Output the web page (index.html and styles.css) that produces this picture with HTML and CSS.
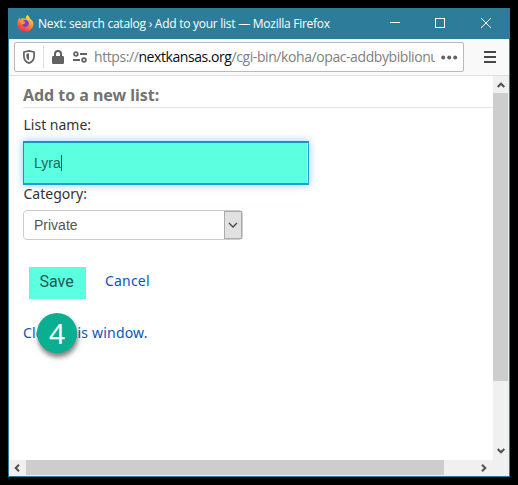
FILE: index.html
```html
<!DOCTYPE html>
<html lang="en">
<head>
<meta charset="utf-8">
<title>Next: search catalog › Add to your list</title>
<link rel="stylesheet" href="styles.css">
</head>
<body>
<div class="window">
  <header class="titlebar">
    <svg class="logo" width="17" height="17" viewBox="0 0 17 17">
      <defs>
        <linearGradient id="flame" x1="0.8" y1="0" x2="0.3" y2="1">
          <stop offset="0" stop-color="#fff04a"/><stop offset=".35" stop-color="#ffb02c"/>
          <stop offset=".65" stop-color="#ff6a36"/><stop offset="1" stop-color="#f02b5c"/>
        </linearGradient>
      </defs>
      <path fill="url(#flame)" d="M10.4 0C12 1.400 12.800 2.500 13.200 3.900C15.300 5 16.600 7 16.400 9.400C16.100 13.500 12.800 16.500 8.500 16.500C3.800 16.500.5 13.200.4 9C.3 6.600 1 4.400 2.700 2.500L3.100 4.200C4 3.500 4.800 3.200 5.700 3.200C6.700 3.200 7.700 3.500 8.500 4C8.700 2.300 9.300 1 10.400 0Z"/>
      <path fill="#7542c9" d="M6.200 5.400C8.400 3.900 11.700 5.400 11.900 8.100C12 10.700 10 12 8.200 11.900C6.500 11.800 5.200 10.700 5 9.200C6.200 9.700 7.400 9.200 8.300 8.300C7 8 5.800 7 6.200 5.400Z"/>
      <path fill="#ff9730" d="M2.800 5.200C4 4.600 5.400 4.800 6.300 5.800L8.400 7.100C7.900 8 6.800 8 6.400 8.800C5.400 9.800 3.600 8.700 2.800 5.200Z"/>
    </svg>
    <span class="caption">Next: search catalog › Add to your list — Mozilla Firefox</span>
    <svg class="controls" width="102" height="12" viewBox="0 0 102 12" fill="none" stroke="#fff" shape-rendering="crispEdges">
      <path d="M0 5.500H10M45.500 1.500H54.500V10.500H45.500Z"/>
      <path shape-rendering="auto" d="M91 1L101 11M101 1L91 11"/>
    </svg>
  </header>
  <nav class="toolbar">
    <div class="address">
      <svg class="shield" width="12" height="14" viewBox="0 0 12 14">
        <path fill="none" stroke="#626262" stroke-width="1.700" stroke-linejoin="round" d="M6 .9L11.100 2V6.200C11.100 9.700 8.800 12 6 13.100C3.200 12 .9 9.700.9 6.200V2Z"/>
        <path fill="#626262" d="M6 3.200V10.600C4.300 9.600 3.400 8.200 3.400 6.200V3.700Z"/>
      </svg>
      <span class="divider"></span>
      <svg class="lock" width="12" height="14" viewBox="0 0 12 14">
        <rect y="6" width="12" height="8" rx="1.200" fill="#626262"/>
        <path fill="none" stroke="#626262" stroke-width="2" d="M3 7V4A3 3 0 0 1 9 4V7"/>
      </svg>
      <svg class="permissions" width="14" height="12" viewBox="0 0 14 12" fill="none" stroke="#626262" stroke-width="1.800">
        <circle cx="2.900" cy="3" r="1.900"/><path d="M7 3H14M0 9H7"/><circle cx="11" cy="9" r="1.900"/>
      </svg>
      <span class="url">https://<b>nextkansas.org</b>/cgi-bin/koha/opac-addbybiblionumber</span>
      <svg class="dots" width="17" height="5" viewBox="0 0 17 5" fill="#626262"><circle cx="2.200" cy="2.500" r="2"/><circle cx="8.200" cy="2.500" r="2"/><circle cx="14.200" cy="2.500" r="2"/></svg>
    </div>
    <svg class="menu" width="12" height="12" viewBox="0 0 12 12" fill="#484848"><path d="M0 0H12V2H0ZM0 5H12V7H0ZM0 10H12V12H0Z"/></svg>
  </nav>
  <div class="viewport">
    <main class="page">
      <h1>Add to a new list:</h1>
      <label class="name-label">List name:</label>
      <div class="name-field"><span>Lyra</span><i></i></div>
      <label class="category-label">Category:</label>
      <div class="select"><span>Private</span>
        <span class="drop"><svg width="10" height="6" viewBox="0 0 10 6"><path fill="none" stroke="#444" stroke-width="1.300" d="M1 1L5 5L9 1"/></svg></span>
      </div>
      <div class="actions"><span class="save">Save</span><a class="cancel">Cancel</a></div>
      <div class="closing"><a>Close this window.</a><span class="step">4</span></div>
    </main>
    <div class="vscroll">
      <svg class="up" width="8" height="6" viewBox="0 0 8 6"><path fill="none" stroke="#505050" stroke-width="2" d="M.7 5L4 1.700L7.300 5"/></svg>
      <div class="vthumb"></div>
      <svg class="down" width="8" height="6" viewBox="0 0 8 6"><path fill="none" stroke="#505050" stroke-width="2" d="M.7 1L4 4.300L7.300 1"/></svg>
    </div>
    <div class="hscroll">
      <svg class="left" width="6" height="8" viewBox="0 0 6 8"><path fill="none" stroke="#505050" stroke-width="2" d="M5 .7L1.700 4L5 7.300"/></svg>
      <div class="hthumb"></div>
      <svg class="right" width="6" height="8" viewBox="0 0 6 8"><path fill="none" stroke="#505050" stroke-width="2" d="M1 .7L4.300 4L1 7.300"/></svg>
    </div>
    <div class="corner"></div>
  </div>
</div>
</body>
</html>
```
FILE: styles.css
```css
* { box-sizing: border-box; }
body { margin: 0; padding: 8px; height: 485px; background: #000; overflow: hidden; font-family: "Noto Sans", sans-serif; }
svg { display: block; flex: none; }
.window { width: 502px; height: 469px; border: 1px solid #2d7d9a; background: #fff; display: flex; flex-direction: column; }
.titlebar { height: 30px; flex: none; background: #2d7d9a; display: flex; align-items: center; padding: 0 17px 0 8px; }
.logo { margin-top: -1px; }
.caption { margin-left: 4px; flex: 1; color: #fff; font: 12px/16px "Open Sans", sans-serif; white-space: nowrap; letter-spacing: -.26px; }
.controls { margin-top: -2px; }
.toolbar { height: 37px; flex: none; background: #f9f9fa; border-bottom: 1px solid #ddd; display: flex; align-items: flex-start; padding: 3px 0 0 5px; }
.address { width: 450px; height: 30px; border: 1px solid #b9b9b9; border-radius: 2px; background: #fff; display: flex; align-items: center; padding-left: 8px; }
.divider { width: 1px; height: 22px; margin: 0 8px; background: #ddd; }
.permissions { margin-left: 9px; }
.url { width: 341px; margin-left: 7px; overflow: hidden; white-space: nowrap; font: 14px/20px "Open Sans", sans-serif; color: #808080; letter-spacing: -.42px; }
.url b { font-weight: 400; color: #0c0c0d; }
.dots { margin-left: 6px; }
.menu { margin: 9px 0 0 20px; }
.viewport { flex: 1; display: grid; grid-template-columns: 484px 16px; grid-template-rows: 384px 16px; }
.page { padding: 9px 0 0 14px; display: flex; flex-direction: column; align-items: flex-start; color: #333; font-size: 14px; line-height: 20px; }
h1 { margin: 0; width: 470px; height: 23px; border-bottom: 1px solid #e5e5e5; color: #727272; font-size: 16px; line-height: 21px; font-weight: 700; letter-spacing: -.04px; }
.name-label { margin: 7px 0 0 .5px; }
.name-field { width: 286px; height: 44px; margin-top: 6px; border: 1px solid #1e9de0; border-width: 2px 1px 2px 1px; border-top-color: #1297bd; border-left-color: #1297bd; background: #5cffe0; box-shadow: inset -1px 0 #d8f8fb, 0 0 8px rgba(82,168,236,.6); display: flex; align-items: center; padding-left: 10px; color: #25665c; font: 14px/20px "Liberation Sans", sans-serif; }
.name-field i { width: 1px; height: 16px; background: #174e47; }
.category-label { margin: -1px 0 0 .5px; }
.select { width: 220px; height: 30px; margin-top: 6px; border: 1px solid #ccc; border-radius: 4px; display: flex; align-items: center; justify-content: space-between; padding-left: 10px; color: #555; font: 14px/20px "Liberation Sans", sans-serif; }
.drop { width: 18px; height: 28px; border: 1px solid #aaa; background: #e1e1e1; display: flex; align-items: center; justify-content: center; }
.actions { margin: 27px 0 0 6px; display: flex; align-items: flex-start; }
.save { width: 57px; height: 32px; padding-right: 2px; background: #5cffe0; color: #235a52; font: 16px/30px Roboto, sans-serif; text-align: center; }
.cancel { margin: 4px 0 0 19px; }
a { color: #0855bd; letter-spacing: .2px; }
.closing { position: relative; margin-top: 24px; }
.step { position: absolute; left: 14px; top: -10px; width: 40px; height: 40px; border-radius: 50%; background: #0aae90; box-shadow: 1px 4px 5px rgba(0,0,0,.5); color: #fff; font: 28px/41px "Noto Sans", sans-serif; text-align: center; }
.vscroll { background: #f0f0f0; display: flex; flex-direction: column; align-items: flex-start; }
.up { margin: 6px 0 5px 4px; }
.vthumb { width: 15px; height: 288px; background: #cdcdcd; }
.down { margin: 67px 0 0 4px; }
.hscroll { background: #f0f0f0; display: flex; }
.left { margin: 4px 6px 0 5px; }
.hthumb { width: 418px; height: 15px; background: #cdcdcd; }
.right { margin: 4px 0 0 37px; }
.corner { background: #f0f0f0; }
```
